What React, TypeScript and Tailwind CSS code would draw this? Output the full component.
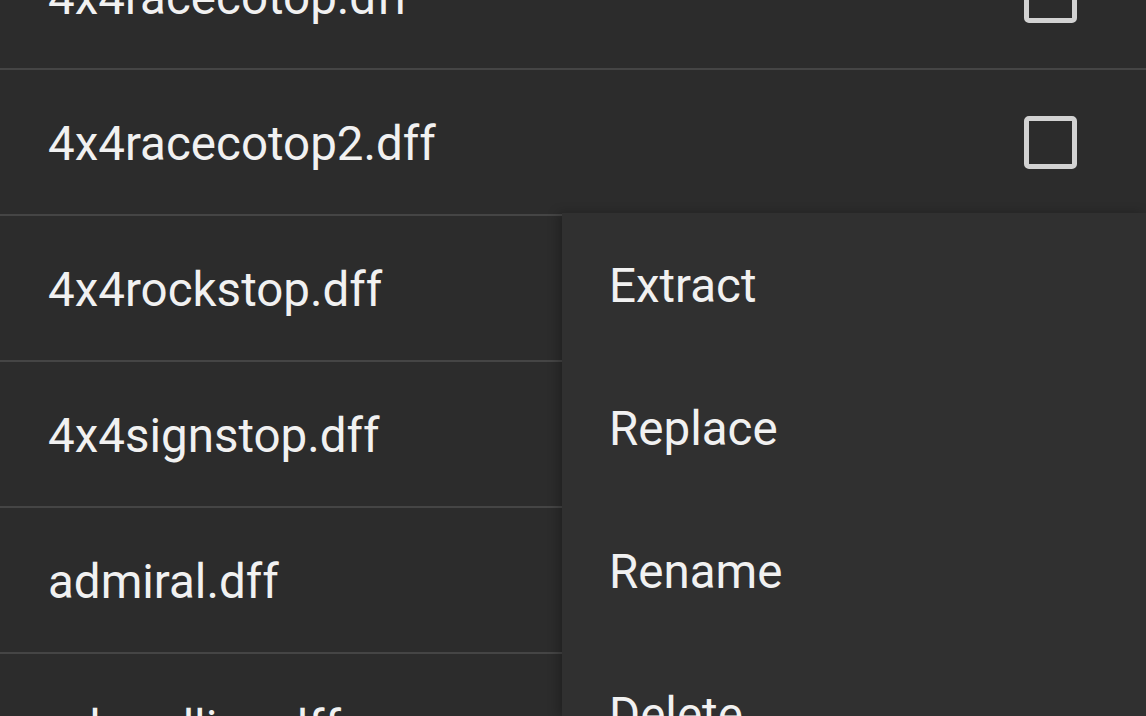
import React from "react";

const files = [
  { name: "4x4racecotop.dff", check: true },
  { name: "4x4racecotop2.dff", check: true },
  { name: "4x4rockstop.dff", check: false },
  { name: "4x4signstop.dff", check: false },
  { name: "admiral.dff", check: false },
  { name: "adreadline.dff", check: false },
];

const menu = ["Extract", "Replace", "Rename", "Delete"];

export default function App() {
  return (
    <div
      className="relative w-[1146px] h-[716px] overflow-hidden bg-[#2c2c2c] text-[#f1f1f1]"
      style={{ fontFamily: "Roboto, 'Noto Sans', sans-serif" }}
    >
      <div className="flex flex-col mt-[-76px]">
        {files.map((f) => (
          <div
            key={f.name}
            className="flex items-center justify-between h-[146px] border-b-2 border-[#454545] pl-[48px] pr-[69px] shrink-0"
          >
            <span className="text-[47.5px] leading-none pt-[5px]">{f.name}</span>
            {f.check && (
              <div className="w-[53px] h-[53px] rounded-[5px] border-[5px] border-[#d2d2d2]" />
            )}
          </div>
        ))}
      </div>
      <div className="absolute left-[562px] top-[213px] right-0 bottom-0 bg-[#303030] shadow-[-4px_0_10px_rgba(0,0,0,0.25)] flex flex-col">
        {menu.map((m) => (
          <div key={m} className="h-[143px] shrink-0 flex items-center pl-[47px] pt-[4px]">
            <span className="text-[47.5px] leading-none">{m}</span>
          </div>
        ))}
      </div>
    </div>
  );
}
